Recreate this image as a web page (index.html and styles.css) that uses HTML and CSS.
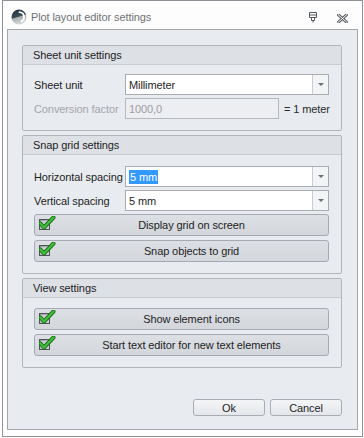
FILE: index.html
```html
<!DOCTYPE html>
<html>
<head>
<meta charset="utf-8">
<link rel="stylesheet" href="styles.css">
</head>
<body>
<div class="window">
  <div class="titlebar">
    <svg class="app-icon" width="16" height="16" viewBox="0 0 16 16">
      <defs>
        <linearGradient id="ag" x1="0" y1="0" x2="0.3" y2="1">
          <stop offset="0" stop-color="#1f2d38"/>
          <stop offset="0.55" stop-color="#3d4c57"/>
          <stop offset="0.6" stop-color="#a9aeb2"/>
          <stop offset="1" stop-color="#d3d6d8"/>
        </linearGradient>
      </defs>
      <circle cx="8" cy="8" r="7.5" fill="url(#ag)"/>
      <path d="M8.5 3.2 A4.8 4.8 0 0 1 10.5 12.2" fill="none" stroke="#ffffff" stroke-width="1.8" stroke-linecap="round"/>
    </svg>
    <span class="title">Plot layout editor settings</span>
    <svg class="pin" width="10" height="11" viewBox="0 0 10 11">
      <path d="M1.5 0.5 H8.5 V5.5 H1.5 Z M1.5 3 H8.5 M3.5 5.5 V8.5 H6.5 V5.5 M5 8.5 V10.5" fill="none" stroke="#555a5f" stroke-width="1"/>
    </svg>
    <svg class="close" width="11" height="9" viewBox="0 0 11 9">
      <path d="M1 0.5 L10 8.5 M10 0.5 L1 8.5" stroke="#5b6065" stroke-width="3" stroke-linecap="square"/>
      <path d="M1 0.5 L10 8.5 M10 0.5 L1 8.5" stroke="#ffffff" stroke-width="1" stroke-linecap="square"/>
    </svg>
  </div>
  <div class="panel">
    <section class="group g1">
      <div class="ghead">Sheet unit settings</div>
      <div class="gbody">
        <div class="row">
          <span class="label">Sheet unit</span>
          <div class="combo"><span class="value">Millimeter</span><span class="drop"><i></i></span></div>
        </div>
        <div class="row">
          <span class="label disabled">Conversion factor</span>
          <div class="conv">
            <div class="field disabled-field">1000,0</div>
            <span class="unit">= 1 meter</span>
          </div>
        </div>
      </div>
    </section>
    <section class="group g2">
      <div class="ghead">Snap grid settings</div>
      <div class="gbody">
        <div class="row">
          <span class="label">Horizontal spacing</span>
          <div class="combo"><span class="value"><span class="sel">5 mm</span></span><span class="drop"><i></i></span></div>
        </div>
        <div class="row">
          <span class="label">Vertical spacing</span>
          <div class="combo"><span class="value">5 mm</span><span class="drop"><i></i></span></div>
        </div>
        <div class="btn toggle">
          <svg class="chk" width="17" height="15" viewBox="0 0 17 15">
            <defs>
              <linearGradient id="bx" x1="0" y1="0" x2="1" y2="1">
                <stop offset="0" stop-color="#8d9398"/>
                <stop offset="1" stop-color="#d8dbde"/>
              </linearGradient>
            </defs>
            <rect x="0.5" y="3.5" width="10" height="10" fill="url(#bx)" stroke="#4e5357"/>
            <rect x="2" y="5" width="7" height="7" fill="#e4e6e8" opacity="0.6"/>
            <path d="M1.5 7.5 L5 11.5 L14.5 1.5" fill="none" stroke="#1d6e1a" stroke-width="4" stroke-linejoin="round" stroke-linecap="round"/>
            <path d="M1.5 7.5 L5 11.5 L14.5 1.5" fill="none" stroke="#3fbf3a" stroke-width="2.2" stroke-linejoin="round" stroke-linecap="round"/>
          </svg>
          <span class="btext">Display grid on screen</span>
        </div>
        <div class="btn toggle">
          <svg class="chk" width="17" height="15" viewBox="0 0 17 15">
            <rect x="0.5" y="3.5" width="10" height="10" fill="url(#bx)" stroke="#4e5357"/>
            <rect x="2" y="5" width="7" height="7" fill="#e4e6e8" opacity="0.6"/>
            <path d="M1.5 7.5 L5 11.5 L14.5 1.5" fill="none" stroke="#1d6e1a" stroke-width="4" stroke-linejoin="round" stroke-linecap="round"/>
            <path d="M1.5 7.5 L5 11.5 L14.5 1.5" fill="none" stroke="#3fbf3a" stroke-width="2.2" stroke-linejoin="round" stroke-linecap="round"/>
          </svg>
          <span class="btext">Snap objects to grid</span>
        </div>
      </div>
    </section>
    <section class="group g3">
      <div class="ghead">View settings</div>
      <div class="gbody">
        <div class="btn toggle">
          <svg class="chk" width="17" height="15" viewBox="0 0 17 15">
            <rect x="0.5" y="3.5" width="10" height="10" fill="url(#bx)" stroke="#4e5357"/>
            <rect x="2" y="5" width="7" height="7" fill="#e4e6e8" opacity="0.6"/>
            <path d="M1.5 7.5 L5 11.5 L14.5 1.5" fill="none" stroke="#1d6e1a" stroke-width="4" stroke-linejoin="round" stroke-linecap="round"/>
            <path d="M1.5 7.5 L5 11.5 L14.5 1.5" fill="none" stroke="#3fbf3a" stroke-width="2.2" stroke-linejoin="round" stroke-linecap="round"/>
          </svg>
          <span class="btext">Show element icons</span>
        </div>
        <div class="btn toggle">
          <svg class="chk" width="17" height="15" viewBox="0 0 17 15">
            <rect x="0.5" y="3.5" width="10" height="10" fill="url(#bx)" stroke="#4e5357"/>
            <rect x="2" y="5" width="7" height="7" fill="#e4e6e8" opacity="0.6"/>
            <path d="M1.5 7.5 L5 11.5 L14.5 1.5" fill="none" stroke="#1d6e1a" stroke-width="4" stroke-linejoin="round" stroke-linecap="round"/>
            <path d="M1.5 7.5 L5 11.5 L14.5 1.5" fill="none" stroke="#3fbf3a" stroke-width="2.2" stroke-linejoin="round" stroke-linecap="round"/>
          </svg>
          <span class="btext">Start text editor for new text elements</span>
        </div>
      </div>
    </section>
    <div class="footer">
      <div class="btn action">Ok</div>
      <div class="btn action">Cancel</div>
    </div>
  </div>
</div>
</body>
</html>
```

FILE: styles.css
```css
* { box-sizing: border-box; }
html, body { margin: 0; padding: 0; background: #ffffff; }
body {
  width: 364px;
  height: 438px;
  font-family: "Liberation Sans", Arial, sans-serif;
  font-size: 11px;
  color: #1e1e1e;
  letter-spacing: -0.1px;
}
.window {
  margin-left: 2px;
  width: 361px;
  height: 437px;
  border: 1px solid #8e9297;
  background: #fdfdfd;
  display: flex;
  flex-direction: column;
  padding: 0 4px 6px 4px;
}
.titlebar {
  height: 28px;
  flex: none;
  display: flex;
  align-items: center;
  padding-left: 4px;
}
.app-icon { flex: none; margin-top: 3px; }
.title {
  margin-left: 4px;
  margin-top: 3px;
  color: #6f7276;
  font-size: 11px;
  flex: 1;
  white-space: nowrap;
}
.pin { flex: none; margin-top: 5px; margin-right: 19px; }
.close { flex: none; margin-top: 6px; margin-right: 10px; }

.panel {
  flex: 1;
  background: #e8ebef;
  border: 1px solid #a4a8ad;
  padding: 15px 15px 13px 14px;
  display: flex;
  flex-direction: column;
  gap: 4px;
}
.group {
  border: 1px solid #b2b6bb;
  border-radius: 2px;
  background: #e8ebef;
}
.ghead {
  height: 19px;
  background: #dde0e5;
  border-bottom: 1px solid #c8cbd0;
  padding-left: 10px;
  line-height: 18px;
  color: #1e1e1e;
  white-space: nowrap;
}
.gbody {
  display: flex;
  flex-direction: column;
  padding: 9px 12px 11px 11px;
}
.g1 .gbody { gap: 3px; }
.g2 .gbody { padding-top: 11px; }
.g3 .gbody { padding-top: 10px; gap: 4px; }
.g2 .row + .row { margin-top: 3px; }
.g2 .row + .toggle { margin-top: 3px; }
.g2 .toggle + .toggle { margin-top: 4px; }

.row {
  display: grid;
  grid-template-columns: 91px 1fr;
  align-items: center;
  height: 21px;
}
.label { white-space: nowrap; }
.label.disabled { color: #a3a6aa; }
.combo {
  height: 21px;
  border: 1px solid #a9adb3;
  background: #ffffff;
  display: flex;
  align-items: stretch;
}
.value {
  flex: 1;
  display: flex;
  align-items: center;
  padding-left: 3px;
}
.sel {
  background: #3399ff;
  color: #ffffff;
  padding: 1px 1px;
  line-height: 12px;
}
.drop {
  width: 16px;
  flex: none;
  border-left: 1px solid #c9ccd0;
  background: #f3f4f6;
  display: flex;
  align-items: center;
  justify-content: center;
}
.drop i {
  display: block;
  width: 0;
  height: 0;
  border-left: 3px solid transparent;
  border-right: 3px solid transparent;
  border-top: 3px solid #6c7075;
}
.conv {
  display: flex;
  align-items: center;
  gap: 5px;
  white-space: nowrap;
}
.field {
  flex: none;
  height: 21px;
  width: 154px;
  border: 1px solid #b5b9be;
  display: flex;
  align-items: center;
  padding-left: 3px;
}
.disabled-field { background: #eceef1; color: #9da0a4; }
.unit { color: #2a2a2a; flex: none; }

.btn {
  border: 1px solid #a6aab0;
  border-radius: 3px;
  background: linear-gradient(#dcdfe3, #d3d6db);
  color: #1e1e1e;
}
.toggle {
  height: 22px;
  display: flex;
  align-items: center;
  padding-left: 4px;
}
.chk { flex: none; margin-top: -4px; }
.btext {
  flex: 1;
  text-align: center;
  padding-right: 1px;
  white-space: nowrap;
}
.footer {
  margin-top: auto;
  display: flex;
  justify-content: flex-end;
  gap: 5px;
}
.action {
  width: 72px;
  height: 17px;
  display: flex;
  align-items: center;
  justify-content: center;
  background: linear-gradient(#f4f5f7, #e4e7eb);
  border-color: #a9adb3;
}
```
